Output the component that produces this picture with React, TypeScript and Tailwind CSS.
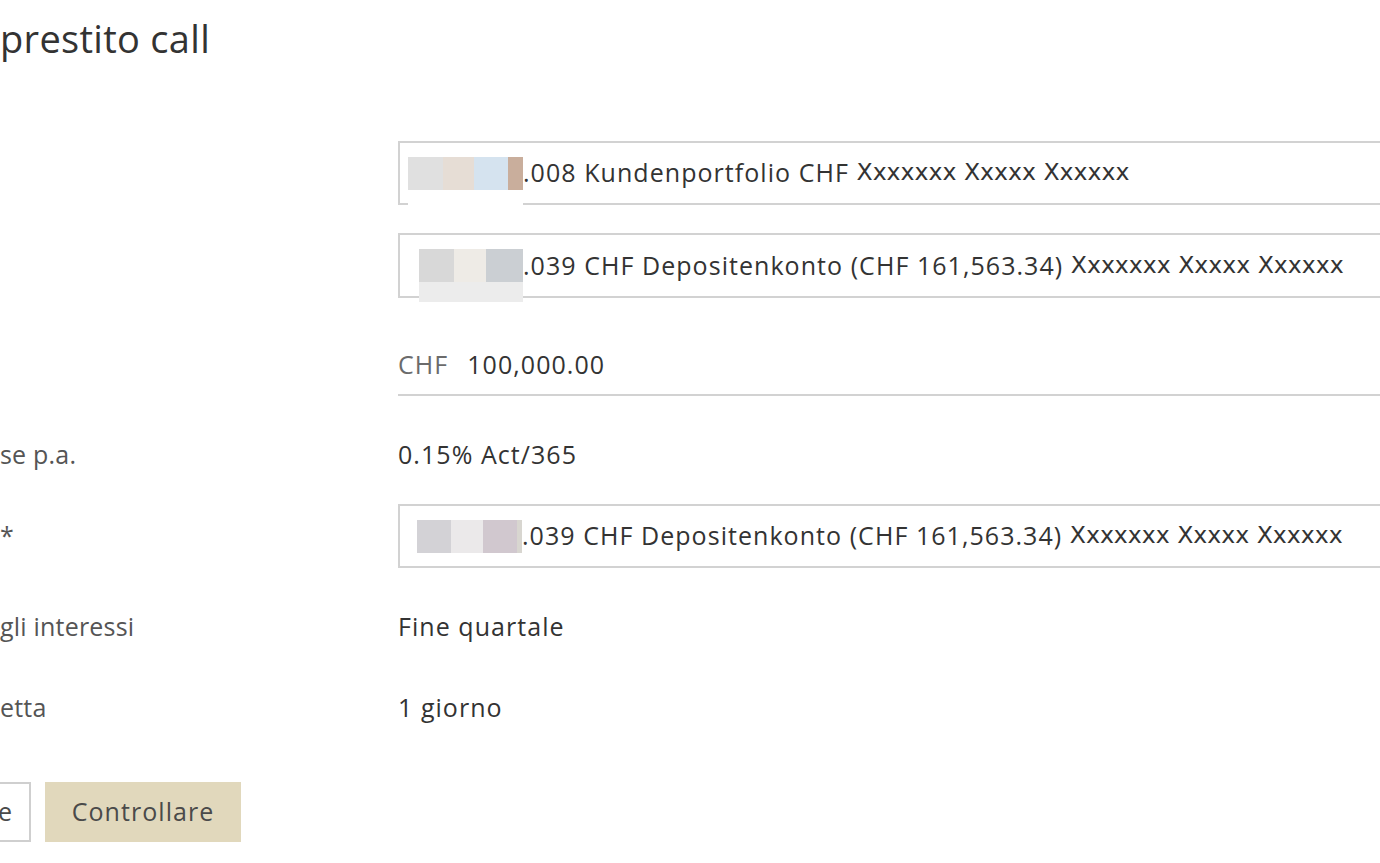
import React from "react";

type Block = { w: number; c: string };

const acct1: Block[] = [
  { w: 35, c: "#e0e0e0" },
  { w: 31, c: "#e6ddd5" },
  { w: 34, c: "#d5e3ef" },
  { w: 15, c: "#c9ae9c" },
];
const acct2: Block[] = [
  { w: 35, c: "#d8d8d8" },
  { w: 32, c: "#eeebe6" },
  { w: 37, c: "#cbcfd3" },
];
const acct3: Block[] = [
  { w: 34, c: "#d3d2d6" },
  { w: 32, c: "#ebe9ea" },
  { w: 34, c: "#d1c8cf" },
  { w: 5, c: "#d8d6d0" },
];

// blurred account numbers, as in the screenshot
function Redacted({ blocks, strip }: { blocks: Block[]; strip?: string }) {
  return (
    <div className="relative flex h-[33px] shrink-0">
      {blocks.map((b, i) => (
        <div key={i} className="h-full" style={{ width: b.w, background: b.c }} />
      ))}
      {strip && <div className={`absolute left-0 top-full h-[20px] w-full ${strip}`} />}
    </div>
  );
}

function Xname() {
  return (
    <span className="font-['DejaVu_Sans',sans-serif] text-[23.6px] tracking-normal">
      Xxxxxxx Xxxxx Xxxxxx
    </span>
  );
}

function Label({ children }: { children?: React.ReactNode }) {
  return <div className="whitespace-nowrap tracking-[0.2px] text-[#555]">{children}</div>;
}

export default function App() {
  return (
    <div className="h-[863px] w-[1380px] overflow-hidden bg-white font-['Open_Sans',sans-serif] text-[25px] tracking-[1.05px] text-[#333]">
      <h1 className="pt-[15px] text-[38px] leading-[46px] tracking-[0.3px] text-[#333]">prestito call</h1>

      <div className="mt-[80px] grid grid-cols-[398px_1fr] items-center">
        <Label />
        <div className="flex h-[64px] w-[1100px] items-center border-2 border-[#d2d2d2] pl-[8px]">
          <Redacted blocks={acct1} strip="bg-white" />
          <span className="whitespace-nowrap">.008 Kundenportfolio CHF&nbsp;</span>
          <Xname />
        </div>
      </div>

      <div className="mt-[28px] grid grid-cols-[398px_1fr] items-center">
        <Label />
        <div className="flex h-[65px] w-[1100px] items-center border-2 border-[#d2d2d2] pl-[19px]">
          <Redacted blocks={acct2} strip="bg-[#ececec]" />
          <span className="whitespace-nowrap">.039 CHF Depositenkonto (CHF 161,563.34)&nbsp;</span>
          <Xname />
        </div>
      </div>

      <div className="mt-[38px] grid grid-cols-[398px_1fr] items-center">
        <Label />
        <div className="flex h-[60px] w-[1100px] items-center gap-[19px] border-b-2 border-[#d2d2d2]">
          <span className="text-[#6b6b6b]">CHF</span>
          <span>100,000.00</span>
        </div>
      </div>

      <div className="mt-[27px] grid h-[64px] grid-cols-[398px_1fr] items-center">
        <Label>se p.a.</Label>
        <div>0.15% Act/365</div>
      </div>

      <div className="mt-[17px] grid grid-cols-[398px_1fr] items-center">
        <Label>*</Label>
        <div className="flex h-[64px] w-[1100px] items-center border-2 border-[#d2d2d2] pl-[17px]">
          <Redacted blocks={acct3} />
          <span className="whitespace-nowrap">.039 CHF Depositenkonto (CHF 161,563.34)&nbsp;</span>
          <Xname />
        </div>
      </div>

      <div className="mt-[27px] grid h-[64px] grid-cols-[398px_1fr] items-center">
        <Label>gli interessi</Label>
        <div>Fine quartale</div>
      </div>

      <div className="mt-[17px] grid h-[64px] grid-cols-[398px_1fr] items-center">
        <Label>etta</Label>
        <div>1 giorno</div>
      </div>

      <div className="mt-[42px] flex gap-[14px]">
        <button
          type="button"
          className="flex h-[60px] w-[31px] items-center justify-end border-y-2 border-r-2 border-[#cfcfcf] bg-white pr-[16px] text-[#4a4a4a]"
        >
          e
        </button>
        <button
          type="button"
          className="flex h-[60px] w-[196px] items-center justify-center bg-[#e1d8bc] text-[#4a4a4a]"
        >
          Controllare
        </button>
      </div>
    </div>
  );
}
